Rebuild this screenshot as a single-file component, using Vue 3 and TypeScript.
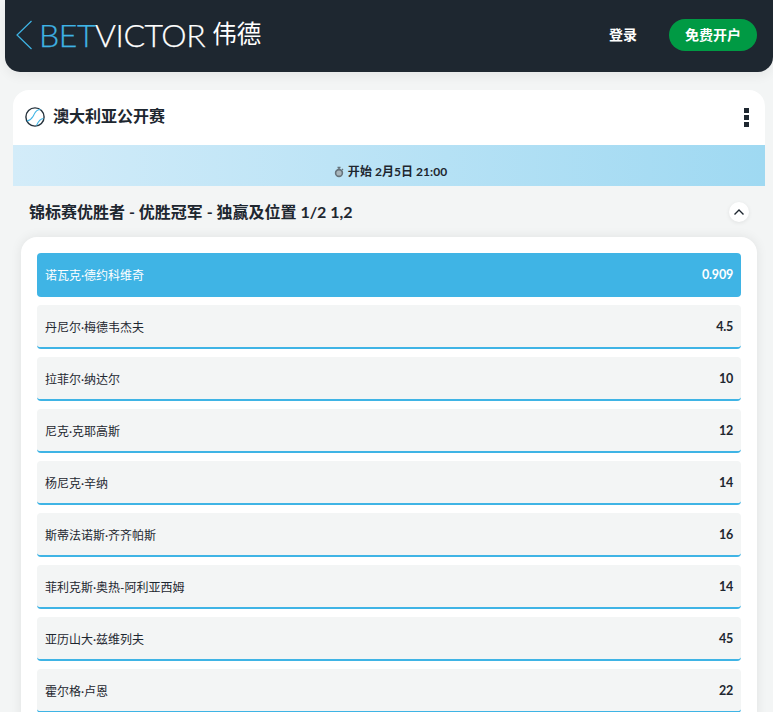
<script setup lang="ts">
interface Runner { name: string; odds: string }
const runners: Runner[] = [
  { name: '诺瓦克·德约科维奇', odds: '0.909' },
  { name: '丹尼尔·梅德韦杰夫', odds: '4.5' },
  { name: '拉菲尔·纳达尔', odds: '10' },
  { name: '尼克·克耶高斯', odds: '12' },
  { name: '杨尼克·辛纳', odds: '14' },
  { name: '斯蒂法诺斯·齐齐帕斯', odds: '16' },
  { name: '菲利克斯·奥热-阿利亚西姆', odds: '14' },
  { name: '亚历山大·兹维列夫', odds: '45' },
  { name: '霍尔格·卢恩', odds: '22' }
]
</script>

<template>
  <div class="page">
    <header class="header">
      <div class="brand">
        <svg class="back" width="17" height="30" viewBox="0 0 17 30" fill="none">
          <path d="M15.5 1 L1 15 L15.5 29" stroke="#3fb4e5" stroke-width="1.2" />
        </svg>
        <span class="logo"><span class="bet">BET</span><span class="victor">VICTOR</span></span>
        <span class="logo-cn">伟德</span>
      </div>
      <div class="actions">
        <span class="login">登录</span>
        <span class="signup">免费开户</span>
      </div>
    </header>

    <section class="event">
      <div class="event-top">
        <div class="event-title">
          <svg class="ball" width="20" height="20" viewBox="0 0 20 20" fill="none">
            <circle cx="10" cy="10" r="9.1" fill="#fff" stroke="#26323c" stroke-width="1.4" />
            <path d="M15.5 2.5 C10 2.5 10 6.5 8 9.5 C6.5 12 4.5 13.5 2 14" stroke="#3fb4e5" stroke-width="1.1" />
            <path d="M18.5 11.5 C16 11.5 13.5 14 11.5 18.5" stroke="#3fb4e5" stroke-width="1.1" />
          </svg>
          <span>澳大利亚公开赛</span>
        </div>
        <div class="dots"><i></i><i></i><i></i></div>
      </div>
      <div class="event-time">
        <svg width="10" height="12" viewBox="0 0 10 12" fill="none">
          <circle cx="5" cy="7" r="3.4" fill="#a9b6bc" stroke="#66737b" stroke-width="1.6" />
          <path d="M3.5 1.5 H6.5 M5 1.5 V3 M8 3 L9 4" stroke="#66737b" stroke-width="1.4" />
        </svg>
        <span>开始 2月5日 21:00</span>
      </div>
    </section>

    <div class="market-head">
      <h2>锦标赛优胜者 - 优胜冠军 - 独赢及位置 1/2 1,2</h2>
      <span class="toggle">
        <svg width="12" height="8" viewBox="0 0 12 8" fill="none">
          <path d="M1.5 6.5 L6 2 L10.5 6.5" stroke="#1e2730" stroke-width="1.4" />
        </svg>
      </span>
    </div>

    <div class="market">
      <div v-for="(r, i) in runners" :key="r.name" class="row" :class="{ active: i === 0 }">
        <span class="name">{{ r.name }}</span>
        <span class="odds">{{ r.odds }}</span>
      </div>
    </div>
  </div>
</template>

<style>
html, body { margin: 0; overflow: hidden; background: #f3f5f5; }
</style>

<style scoped>
.page {
  height: 712px;
  overflow: hidden;
  background: #f3f5f5;
  font-family: Lato, "Noto Sans CJK SC", sans-serif;
  color: #1e2730;
}
.header {
  height: 72px;
  margin-left: 5px;
  box-sizing: border-box;
  padding: 0 16px 3px 11px;
  display: flex;
  align-items: center;
  justify-content: space-between;
  background: #1e2730;
  border-radius: 0 0 15px 15px;
  box-shadow: 0 4px 12px rgba(0, 0, 0, 0.06);
}
.brand { display: flex; align-items: center; }
.back { margin-right: 7px; }
.logo {
  font-size: 32px;
  font-weight: 300;
  letter-spacing: -0.45px;
  line-height: 1;
  margin-left: -1px;
  -webkit-text-stroke: 0.25px currentColor;
}
.bet { color: #3fb4e5; }
.victor { color: #fff; }
.logo-cn { margin-left: 7px; font-size: 24.5px; font-weight: 400; color: #fff; line-height: 1; }
.actions { display: flex; align-items: center; gap: 32px; }
.login, .signup { font-size: 14px; line-height: 32px; font-weight: 700; color: #fff; }
.signup {
  width: 88px;
  height: 32px;
  text-align: center;
  border-radius: 16px;
  background: #009a44;
}
.event { margin: 18px 8px 0 13px; }
.event-top {
  height: 55px;
  box-sizing: border-box;
  padding: 0 16px 5px 12px;
  display: flex;
  align-items: center;
  justify-content: space-between;
  background: #fff;
  border-radius: 16px 16px 0 0;
}
.event-title { display: flex; align-items: center; gap: 8px; font-size: 16px; font-weight: 700; }
.ball { margin-top: 4px; }
.dots { display: flex; flex-direction: column; gap: 2px; margin-top: 5px; }
.dots i { display: block; width: 5px; height: 5px; background: #1e2730; }
.event-time {
  height: 41px;
  box-sizing: border-box;
  padding: 0 0 5px 3px;
  display: flex;
  align-items: flex-end;
  justify-content: center;
  gap: 4px;
  font-size: 12px;
  font-weight: 700;
  line-height: 18px;
  letter-spacing: 0.05px;
  background: linear-gradient(90deg, #d3ecf9, #9fd9f2);
}
.event-time svg { margin-bottom: 3px; }
.market-head {
  height: 51px;
  box-sizing: border-box;
  padding: 0 24px 1px 29px;
  display: flex;
  align-items: center;
  justify-content: space-between;
}
.market-head h2 { margin: 0; font-size: 16px; font-weight: 700; }
.toggle {
  width: 20px;
  height: 20px;
  margin-top: 2px;
  display: flex;
  align-items: center;
  justify-content: center;
  border-radius: 50%;
  background: #fff;
  box-shadow: 0 1px 4px rgba(0, 0, 0, 0.08);
}
.market {
  margin: 0 16px 0 21px;
  padding: 16px;
  display: flex;
  flex-direction: column;
  gap: 8px;
  background: #fff;
  border-radius: 16px;
  box-shadow: 0 0 12px rgba(0, 0, 0, 0.08);
}
.row {
  height: 44px;
  flex: none;
  box-sizing: border-box;
  padding: 0 8px;
  display: flex;
  align-items: center;
  justify-content: space-between;
  background: #f3f5f5;
  border-bottom: 2px solid #3fb4e5;
  border-radius: 4px;
  font-size: 12px;
}
.row.active { background: #3fb4e5; color: #fff; }
.odds { font-size: 12.5px; font-weight: 700; letter-spacing: -0.2px; margin-top: 1px; }
</style>
